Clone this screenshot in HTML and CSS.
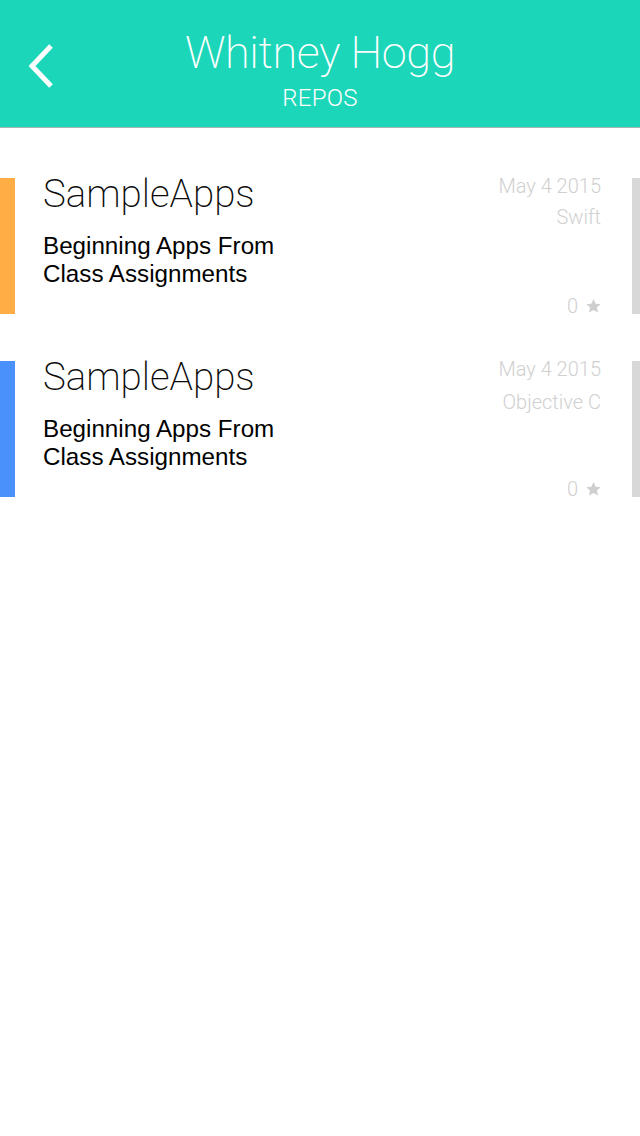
FILE: index.html
```html
<!DOCTYPE html>
<html>
<head>
<meta charset="utf-8">
<link rel="stylesheet" href="styles.css">
</head>
<body>
<header class="topbar">
  <div class="back">
    <svg width="30" height="46" viewBox="0 0 30 46"><polyline points="24,3 5,23 24,43" fill="none" stroke="#fff" stroke-width="5"/></svg>
  </div>
  <div class="heading">
    <div class="name">Whitney Hogg</div>
    <div class="section">REPOS</div>
  </div>
  <div class="spacer"></div>
</header>
<main class="list">
  <div class="card">
    <div class="bar bar-orange"></div>
    <div class="body">
      <div class="main">
        <div class="title">SampleApps</div>
        <div class="desc">Beginning Apps From<br>Class Assignments</div>
      </div>
      <div class="meta">
        <div class="date">May 4 2015</div>
        <div class="lang">Swift</div>
        <div class="stars">0 <svg class="star" width="15" height="14" viewBox="0 0 24 23"><path d="M12 0l3.5 7.6 8.3.9-6.2 5.6 1.8 8.2L12 18.1 4.6 22.3l1.8-8.2L.2 8.5l8.3-.9z" fill="#cfcfcf"/></svg></div>
      </div>
    </div>
    <div class="side"></div>
  </div>
  <div class="card">
    <div class="bar bar-blue"></div>
    <div class="body">
      <div class="main">
        <div class="title">SampleApps</div>
        <div class="desc">Beginning Apps From<br>Class Assignments</div>
      </div>
      <div class="meta">
        <div class="date">May 4 2015</div>
        <div class="lang lang-2">Objective C</div>
        <div class="stars">0 <svg class="star" width="15" height="14" viewBox="0 0 24 23"><path d="M12 0l3.5 7.6 8.3.9-6.2 5.6 1.8 8.2L12 18.1 4.6 22.3l1.8-8.2L.2 8.5l8.3-.9z" fill="#cfcfcf"/></svg></div>
      </div>
    </div>
    <div class="side"></div>
  </div>
</main>
</body>
</html>
```
FILE: styles.css
```css
html, body {
  margin: 0;
  padding: 0;
  background: #fff;
}
body {
  width: 640px;
  font-family: Roboto, "Liberation Sans", sans-serif;
}
.topbar {
  height: 127px;
  background: #1cd6b9;
  border-bottom: 1px solid #a8b5b2;
  display: grid;
  grid-template-columns: 1fr auto 1fr;
  color: #fff;
}
.back {
  padding: 43px 0 0 27px;
}
.back svg {
  display: block;
}
.heading {
  text-align: center;
  padding-top: 30px;
}
.name {
  font-size: 45px;
  font-weight: 200;
  line-height: 46px;
  letter-spacing: -0.4px;
}
.section {
  font-size: 24px;
  font-weight: 300;
  line-height: 22px;
  margin-top: 11px;
  letter-spacing: 0.3px;
}
.list {
  padding-top: 50px;
  display: flex;
  flex-direction: column;
  gap: 47px;
}
.card {
  display: flex;
  height: 136px;
}
.bar {
  width: 15px;
  flex: none;
}
.bar-orange { background: #ffad44; }
.bar-blue { background: #4a91fb; }
.side {
  width: 8px;
  flex: none;
  background: #d8d8d8;
}
.body {
  flex: 1;
  display: flex;
  padding: 0 31px 0 28px;
}
.main {
  flex: 1;
}
.title {
  font-size: 38.5px;
  font-weight: 200;
  line-height: 32px;
  color: #0a0a0a;
}
.desc {
  font-family: "Liberation Sans", Arial, sans-serif;
  font-size: 24.2px;
  line-height: 28px;
  color: #000;
  margin-top: 22px;
}
.meta {
  display: flex;
  flex-direction: column;
  align-items: flex-end;
  color: #d0d0d0;
  font-size: 20px;
  font-weight: 300;
}
.date {
  line-height: 20px;
  margin-top: -2px;
}
.lang {
  line-height: 30px;
  margin-top: 6px;
}
.lang-2 {
  margin-top: 8px;
}
.stars {
  margin-top: auto;
  line-height: 16px;
  display: flex;
  align-items: center;
  gap: 8px;
}
.star {
  display: block;
}
```
